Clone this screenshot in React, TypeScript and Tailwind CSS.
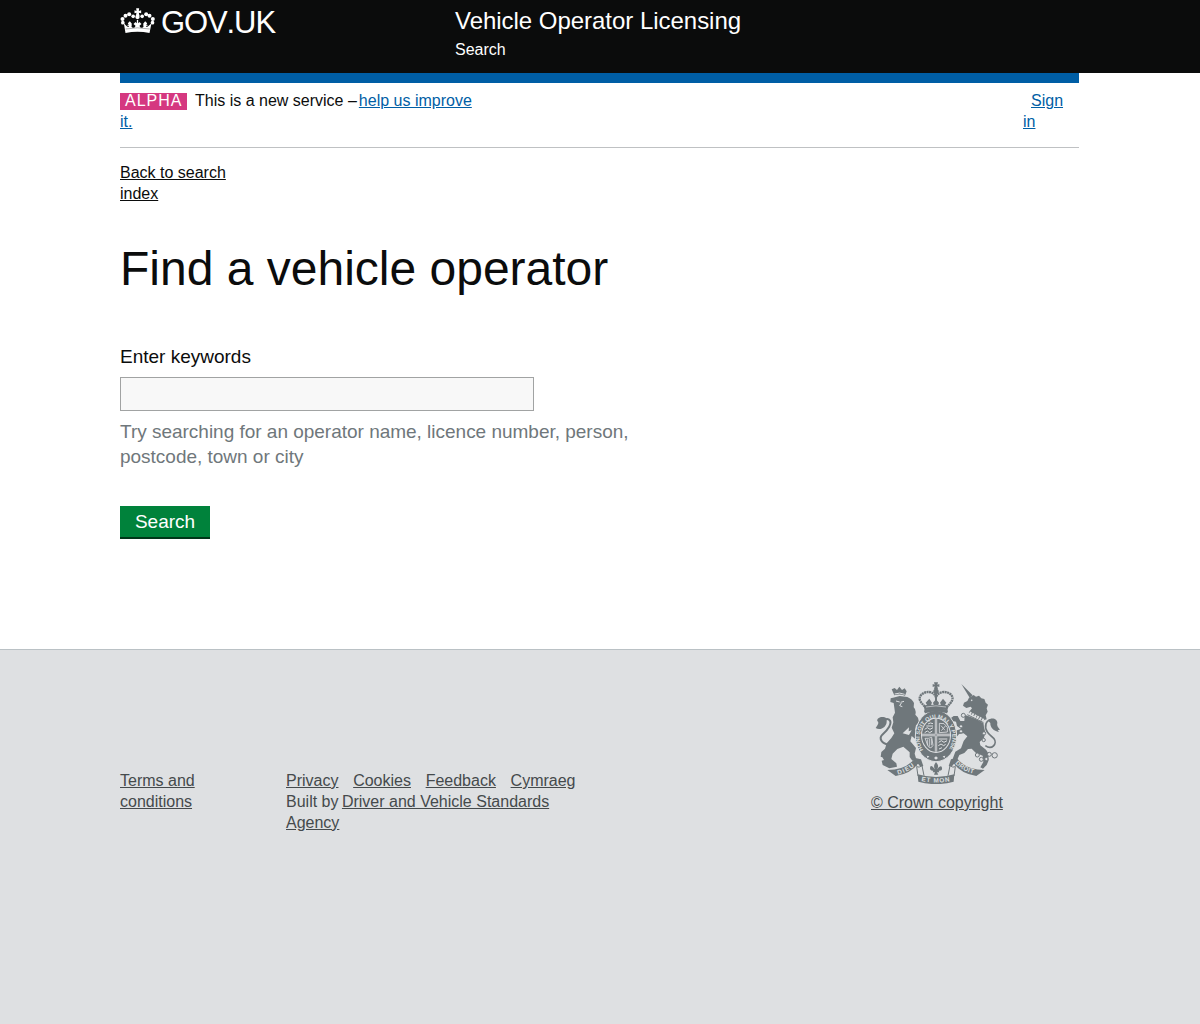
import type { ReactNode } from "react";

function Crown() {
  return (
    <svg viewBox="30 24 104 78" className="block h-[26px] w-[35px] shrink-0" fill="#fff">
      <path d="M41 70 L46 99 Q82 92 118 99 L124 70 L114 79 Q108 83 107 77 L111 70 L105 64 L99 71 Q103 82 95 83 Q89 84 88 77 L94 72 L88 66 L84 70 V60 H80 V70 L76 66 L70 72 L76 77 Q75 84 69 83 Q61 82 65 71 L59 64 L53 70 L57 77 Q56 83 50 79 Z" />
      <path d="M79 33 L78 25 H87 L86 33 L93 31 V40 L86 38 L88 48 H77 L79 38 L73 40 V31 Z" />
      <circle cx="82" cy="51" r="6.5" /><circle cx="57" cy="43" r="6" /><circle cx="69" cy="49" r="5.5" />
      <circle cx="46" cy="47" r="6" /><circle cx="37" cy="57" r="6" /><circle cx="38" cy="68" r="5.5" />
      <circle cx="108" cy="43" r="6" /><circle cx="96" cy="49" r="5.5" /><circle cx="118" cy="47" r="6" />
      <circle cx="128" cy="57" r="6" /><circle cx="127" cy="68" r="5.5" />
      <path d="M58 72v10M106 72v10M52 76h12M100 76h12" stroke="#fff" strokeWidth="3" />
      <path d="M46 87 Q82 80 119 87" fill="none" stroke="#0b0c0c" strokeWidth="1" />
    </svg>
  );
}

function Crest() {
  return (
    <svg viewBox="45 36 375 306" className="block h-[102px] w-[125px]" fill="#6f777b" fontFamily="Liberation Sans, sans-serif">
      {/* lion */}
      <path d="M99 83 L119 78 L142 81 Q157 87 162 99 L161 112 Q170 120 166 134 L174 143 L177 157 L168 166 L165 181 L177 188 L178 205 L166 207 L155 198 L151 214 L168 234 L164 251 L169 268 L157 272 L149 261 L149 247 L130 230 L112 237 L98 251 L94 267 L109 280 L111 290 L88 295 L68 285 L65 272 L72 270 L67 262 L62 260 L64 246 L75 236 L80 220 L94 204 L103 190 L95 173 L100 157 L98 142 L105 128 L103 113 L101 99 L91 96 L92 85 Z" />
      <path d="M88 224 C64 222 56 205 67 194 C82 181 100 158 87 149 Q80 144 74 151" fill="none" stroke="#6f777b" strokeWidth="6" />
      <path d="M80 145 C68 136 49 143 52 153 Q60 157 47 174 C61 184 80 170 80 155Z" />
      <path d="M103 76 L95 58 L104 54 L111 60 L118 50 L126 60 L134 55 L140 64 L135 77 Q118 70 103 76Z" />
      <g stroke="#dee0e2" fill="none" strokeWidth="3">
        <path d="M104 72 Q119 66 134 73M108 93l11 3M132 94l-10 3M124 99l-5 8 8 3" />
      </g>
      <path d="M128 190 L147 172 L146 184 L155 181 L147 195Z" fill="#dee0e2" />

      {/* unicorn */}
      <path d="M304 42 L338 76 L329 83 Z" />
      <path d="M327 83 L341 75 L348 80 L357 77 L364 85 L373 87 L377 98 L384 104 L380 115 L383 125 L377 136 L380 148 L365 153 L325 128 L336 115 L332 110 L319 114 L309 107 L312 98 L322 93 Z" />
      <path d="M314 134 L370 155 L372 172 L376 187 L372 203 L359 216 L361 226 L378 239 L385 250 L386 271 L380 285 L369 296 L361 292 L370 276 L368 257 L347 248 L335 236 L324 237 L313 249 L298 255 L289 275 L276 272 L286 245 L303 235 L311 213 L322 199 L311 190 L297 192 L292 199 L282 189 L291 181 L304 177 L291 168 L288 155 L278 153 L273 144 L281 138 L293 138 L301 153 L313 153Z" />
      <path d="M376 227 C396 242 413 220 402 206 C387 193 372 181 378 161 Q385 145 398 151" fill="none" stroke="#6f777b" strokeWidth="5" />
      <path d="M384 152 C394 140 413 147 412 159 Q409 168 420 179 L413 181 L417 186 C401 184 390 171 391 159Z" />
      <path d="M320 126 L371 153" stroke="#dee0e2" strokeWidth="12" strokeDasharray="6 2.5" />
      <path d="M322 134 L369 157" stroke="#6f777b" strokeWidth="3" />
      <circle cx="335" cy="91" r="2.5" fill="#dee0e2" />
      <g fill="#dee0e2" stroke="#6f777b" strokeWidth="3">
        <circle cx="310" cy="136" r="6" /><circle cx="303" cy="169" r="5" /><circle cx="303" cy="184" r="5" /><circle cx="372" cy="190" r="5" /><circle cx="371" cy="210" r="5" />
        <circle cx="352" cy="255" r="6" /><circle cx="364" cy="268" r="6" /><circle cx="379" cy="267" r="5" /><circle cx="388" cy="253" r="6" /><circle cx="404" cy="256" r="8" />
      </g>

      {/* garter and quartered shield */}
      <ellipse cx="228" cy="198" rx="62" ry="77" stroke="#dee0e2" strokeWidth="3" />
      <ellipse cx="228" cy="196" rx="45" ry="53" fill="#dee0e2" />
      <ellipse cx="228" cy="196" rx="42" ry="50" />
      <defs><path id="garter" d="M190 240 A49 58 0 1 1 266 240" /></defs>
      <text fontSize="17" fontWeight="bold" fill="#dee0e2"><textPath href="#garter" textLength="242" lengthAdjust="spacingAndGlyphs">HONI SOIT QUI MAL Y PENSE</textPath></text>
      <g stroke="#dee0e2" fill="none">
        <path d="M228 147v98M186 195h84" strokeWidth="7" />
        <path d="M199 168h20M194 178l8-5 8 5 9-5M194 188l8-5 7 5 8-5M204 162l7-3 8 2M236 207h26M236 217l8-5 8 5 9-5M235 227l8-5 8 5 6-4M237 237l9-4" strokeWidth="3" />
        <path d="M238 160l14 1 10 11v14l-24 2zM243 167l12 14M256 168l-12 14M195 205q13 1 20-3l4 24q-6 12-14 4zM202 208v18M208 207v23M214 206v20" strokeWidth="2.5" />
        <path d="M228 147v98M186 195h84" stroke="#6f777b" strokeWidth="2" />
      </g>
      <path d="M200 257l8 2-5 6zM228 259l6 5-6 5-6-5zM256 257l-8 2 5 6z" fill="#dee0e2" />

      {/* crown above the shield */}
      <path d="M224 44 L222 37 H234 L232 44 L238 42 V51 L232 49 L234 58 H222 L224 49 L218 51 V42Z" />
      <circle cx="228" cy="64" r="8" />
      <path d="M195 110 C181 96 173 86 184 74 C199 61 222 64 228 82 C234 64 259 61 273 74 C283 86 276 96 261 110" fill="none" stroke="#6f777b" strokeWidth="7" strokeDasharray="6 1.5" />
      <path d="M228 68 V108" stroke="#6f777b" strokeWidth="6" />
      <path d="M191 108 L201 104 L197 98 L208 86 L216 98 L213 104 L221 105 L219 98 L228 88 L237 98 L235 105 L243 104 L240 98 L249 86 L259 98 L255 104 L266 108 L262 121 Q228 113 194 121Z" />
      <path d="M192 124 L194 119 Q228 112 262 119 L264 124 L261 130 Q228 119 195 130Z" />
      <path d="M198 111 Q228 104 258 111" fill="none" stroke="#dee0e2" strokeWidth="2" />

      {/* motto ribbon */}
      <path d="M82 300 Q138 300 166 264 L183 268 L190 288 Q180 292 174 281 Q153 310 107 318Z" />
      <path d="M374 300 Q318 300 290 264 L273 268 L266 288 Q276 292 282 281 Q303 310 349 318Z" />
      <path d="M173 313 Q228 329 283 313 L281 335 Q228 350 175 335Z" />
      <path d="M168 279 Q168 299 186 287 L192 317 M288 279 Q288 299 270 287 L264 317 M174 318L170 290 M282 318L286 290" fill="none" stroke="#6f777b" strokeWidth="3" />
      <path d="M228 277 Q218 287 225 298 Q211 280 210 294 Q210 303 220 302 L218 307 H225 L222 314 H235 L231 307 H238 L236 302 Q248 303 246 293 Q243 282 231 298 Q239 287 228 277Z" />
      <defs><path id="motto-left" d="M114 314 Q146 306 170 282" /><path id="motto-mid" d="M184 333 Q228 342 275 333" /><path id="motto-right" d="M285 280 Q309 305 346 312" /></defs>
      <g fill="#dee0e2" fontSize="19" fontWeight="bold">
        <text><textPath href="#motto-left" textLength="56">DIEU</textPath></text>
        <text><textPath href="#motto-mid" textLength="86">ET MON</textPath></text>
        <text><textPath href="#motto-right" textLength="64">DROIT</textPath></text>
      </g>
    </svg>
  );
}

function Link({ children, className = "" }: { children: ReactNode; className?: string }) {
  return <a href="#" className={`underline ${className}`}>{children}</a>;
}

export default function App() {
  return (
    <div className="flex min-h-screen flex-col bg-[#dee0e2] font-['Liberation_Sans',Arial,sans-serif] text-base leading-[21px] text-[#0b0c0c]">
      <header className="h-[73px] bg-[#0b0c0c] text-white">
        <div className="mx-auto flex w-[960px]">
          <a href="#" className="flex h-[44px] w-[335px] gap-[6px]">
            <span className="pt-2"><Crown /></span>
            <span className="pt-px text-[31px] leading-[44px] tracking-[-1.1px] [font-kerning:none]">GOV.UK</span>
          </a>
          <div className="pt-[6px]">
            <div className="text-2xl leading-[30px] tracking-[-0.03px]">Vehicle Operator Licensing</div>
            <div className="mt-[3px]">Search</div>
          </div>
        </div>
      </header>

      <main className="h-[576px] bg-white">
        <div className="mx-auto w-[960px]">
          <div className="mr-px h-[10px] bg-[#005ea5]" />
          <div className="mr-px flex h-[65px] justify-between border-b border-[#bfc1c3] pt-[7px]">
            <p className="w-[360px]">
              <strong className="mr-2 inline-block h-[17px] w-[67px] overflow-hidden bg-[#d53880] pl-[5px] align-[-4px] font-normal leading-[16px] tracking-[1px] text-white">ALPHA</strong>
              <span>This is a new service –</span>
              <Link className="ml-[2px] text-[#005ea5]">help us improve it.</Link>
            </p>
            <p className="w-[56px] indent-2"><Link className="text-[#005ea5]">Sign<br />in</Link></p>
          </div>
          <p className="mt-[14px] w-[120px]"><Link>Back to search index</Link></p>
          <h1 className="mt-[40px] text-[48px] leading-[50px]">Find a vehicle operator</h1>
          <form className="mt-[50px] text-[19px] leading-[25px]">
            <label htmlFor="keywords" className="block">Enter keywords</label>
            <input id="keywords" className="mt-2 block h-[34px] w-[414px] border border-[#a1a3a3] bg-[#f8f8f8]" />
            <p className="mt-[8px] w-[540px] tracking-[-0.015px] text-[#6f777b]">Try searching for an operator name, licence number, person, postcode, town or city</p>
            <button type="button" className="mt-[37px] block h-[33px] w-[90px] border-b-2 border-[#003618] bg-[#00823b] leading-[31px] text-white">Search</button>
          </form>
        </div>
      </main>

      <footer className="flex-1 border-t border-[#a1acb2]/60 text-[#454a4c]">
        <div className="mx-auto flex w-[960px]">
          <p className="mt-[120px] w-[166px] pr-[60px]"><Link>Terms and conditions</Link></p>
          <div className="mt-[120px] w-[300px]">
            <div className="flex gap-[14.7px]"><Link>Privacy</Link><Link>Cookies</Link><Link>Feedback</Link><Link>Cymraeg</Link></div>
            <p>Built by <Link className="-ml-px">Driver and Vehicle Standards Agency</Link></p>
          </div>
          <div className="ml-[285px] mt-8 w-[132px]">
            <div className="pl-1"><Crest /></div>
            <p className="mt-2 whitespace-nowrap"><Link>© Crown copyright</Link></p>
          </div>
        </div>
      </footer>
    </div>
  );
}
